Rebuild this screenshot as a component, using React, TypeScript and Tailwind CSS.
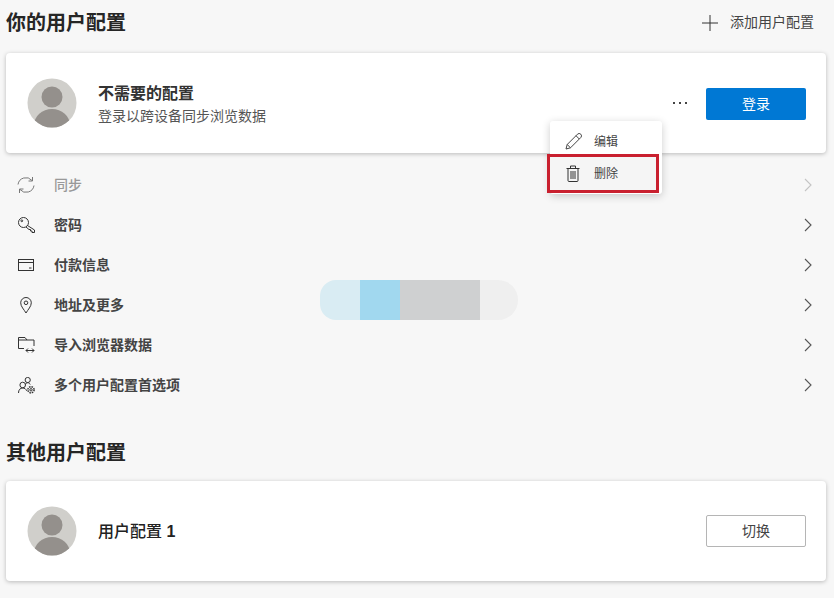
const FONT = "font-['Liberation_Sans','Noto_Sans_CJK_SC',sans-serif]"

function Avatar() {
  return (
    <svg width="50" height="50" viewBox="0 0 50 50" className="shrink-0">
      <defs>
        <clipPath id="avatar-clip">
          <circle cx="25" cy="25" r="24.5" />
        </clipPath>
      </defs>
      <circle cx="25" cy="25" r="24.5" fill="#d0cfcb" />
      <g clipPath="url(#avatar-clip)">
        <circle cx="25" cy="19" r="10.5" fill="#94908c" />
        <ellipse cx="25" cy="47" rx="18" ry="16" fill="#94908c" />
      </g>
    </svg>
  )
}

function Chevron({ light }: { light?: boolean }) {
  return (
    <svg width="10" height="14" viewBox="0 0 10 14" fill="none" stroke={light ? '#c4c4c4' : '#555'} strokeWidth="1.1">
      <path d="M2 1l6 6-6 6" />
    </svg>
  )
}

function SyncIcon() {
  return (
    <svg width="18" height="18" viewBox="0 0 18 18" fill="none" stroke="#777" strokeWidth="1">
      <path d="M1 8.500A8 8 0 0 1 15 4.500M15.500 1V5H11.500" />
      <path d="M17 9.500A8 8 0 0 1 3 13.500M2.500 17V13H6.500" />
    </svg>
  )
}

function KeyIcon() {
  return (
    <svg width="17" height="16" viewBox="0 0 17 16" fill="none" stroke="#333" strokeWidth="1">
      <circle cx="5.500" cy="5.500" r="5" />
      <circle cx="3.800" cy="3.800" r="0.900" />
      <path d="M9.500 8.500l7 4.500v2.500h-2.500v-1.500h-1.500v-1.500h-1.500L8 10" />
    </svg>
  )
}

function CardIcon() {
  return (
    <svg width="16" height="14" viewBox="0 0 16 14" fill="none" stroke="#333" strokeWidth="1">
      <rect x="0.5" y="1.5" width="15" height="11" />
      <path d="M0.5 4.5h15M11 10h2.5" />
    </svg>
  )
}

function PinIcon() {
  return (
    <svg width="12" height="17" viewBox="0 0 12 17" fill="none" stroke="#333" strokeWidth="1">
      <path d="M6 16C4 12.500 0.700 9.500 0.700 5.800a5.300 5.300 0 0 1 10.600 0c0 3.700-3.300 6.700-5.300 10.200z" />
      <circle cx="6" cy="5.800" r="1.800" />
    </svg>
  )
}

function ImportIcon() {
  return (
    <svg width="17" height="16" viewBox="0 0 17 16" fill="none" stroke="#333" strokeWidth="1">
      <path d="M6 11.500H0.500V0.500H7L9 3H16V9" />
      <path d="M0.500 3H9" />
      <path d="M8 13.500h8M10 11.500l-2 2 2 2M14 11.500l2 2-2 2" />
    </svg>
  )
}

function UsersIcon() {
  return (
    <svg width="17" height="17" viewBox="0 0 17 17" fill="none" stroke="#333" strokeWidth="1">
      <circle cx="4.700" cy="8" r="2.800" />
      <path d="M0.500 16c0-3.300 1.800-5 4.200-5 1.900 0 3.300 1 3.900 2.800" />
      <circle cx="9.700" cy="3" r="2.600" />
      <path d="M7.400 7.500c0.500-1.200 1.300-1.800 2.300-1.800 1.100 0 2 0.700 2.500 1.800" />
      <circle cx="13" cy="12.800" r="1.200" />
      <circle cx="13" cy="12.800" r="3.100" strokeDasharray="1.500 0.950" strokeWidth="1.500" />
    </svg>
  )
}

function PencilIcon() {
  return (
    <svg width="17" height="17" viewBox="0 0 17 17" fill="none" stroke="#444" strokeWidth="1">
      <path d="M1 16l1.200-4.500L12.500 1.200a1.800 1.800 0 0 1 3.300 3.300L5.500 14.800z" />
      <path d="M2.200 11.500l3.300 3.300M11 2.700l3.300 3.300" />
    </svg>
  )
}

function TrashIcon() {
  return (
    <svg width="14" height="17" viewBox="0 0 14 17" fill="none" stroke="#333" strokeWidth="1">
      <path d="M0.500 3.500h13M4.500 3.500V1h5v2.500M2 3.500V15.500a1 1 0 0 0 1 1h8a1 1 0 0 0 1-1V3.500" />
      <path d="M5 6v8M7 6v8M9 6v8" />
    </svg>
  )
}

const rows = [
  { label: '同步', icon: <SyncIcon />, muted: true },
  { label: '密码', icon: <KeyIcon /> },
  { label: '付款信息', icon: <CardIcon /> },
  { label: '地址及更多', icon: <PinIcon /> },
  { label: '导入浏览器数据', icon: <ImportIcon /> },
  { label: '多个用户配置首选项', icon: <UsersIcon /> },
]

export default function App() {
  return (
    <div className={`${FONT} relative w-[834px] h-[598px] overflow-hidden bg-[#f7f7f7] text-[#262626] px-[6px]`}>
      {/* Cabecera */}
      <div className="flex items-center justify-between h-[53px] pb-[8px]">
        <h1 className="text-[20px] font-bold leading-[28px]">你的用户配置</h1>
        <div className="flex items-center gap-[12px] pr-[14px] text-[14px] text-[#444]">
          <svg width="16" height="16" viewBox="0 0 16 16" stroke="#333" strokeWidth="1">
            <path d="M8 0v16M0 8h16" />
          </svg>
          <span>添加用户配置</span>
        </div>
      </div>

      {/* Tarjeta principal */}
      <div className="relative flex items-center w-[820px] h-[100px] bg-white rounded-[4px] shadow-[0_1px_4px_rgba(0,0,0,0.25)] pl-[21px] pr-[20px]">
        <Avatar />
        <div className="ml-[21px] flex-1 pt-[4px]">
          <p className="text-[16px] font-bold leading-[22px] text-[#333]">不需要的配置</p>
          <p className="text-[14px] leading-[22px] text-[#555]">登录以跨设备同步浏览数据</p>
        </div>
        <span className="mr-[19px] flex gap-[4px]">
          <i className="w-[2px] h-[2px] bg-[#444]" />
          <i className="w-[2px] h-[2px] bg-[#444]" />
          <i className="w-[2px] h-[2px] bg-[#444]" />
        </span>
        <button className="mt-[2px] w-[100px] h-[32px] bg-[#0078d4] text-white text-[14px] rounded-[2px]">登录</button>

        {/* Menú contextual */}
        <div className="absolute z-20 left-[544px] top-[68px] w-[112px] h-[73px] bg-white rounded-[3px] shadow-[0_2px_8px_rgba(0,0,0,0.2)] flex flex-col text-[12px] text-[#444]">
          <div className="flex items-center h-[33px] pt-[8px] pl-[15px] gap-[12px]">
            <PencilIcon />
            <span>编辑</span>
          </div>
          <div className="flex items-center h-[39px] w-[112px] -ml-[3px] pl-[16px] gap-[14px] bg-[#f5f5f5] border-[3px] border-[#c9202f]">
            <TrashIcon />
            <span>删除</span>
          </div>
        </div>
      </div>

      {/* Lista de opciones */}
      <div className="mt-[12px] flex flex-col">
        {rows.map((row) => (
          <div key={row.label} className="flex items-center h-[40px] pl-[11px] pr-[15px]">
            <span className="w-[18px] flex justify-center">{row.icon}</span>
            <span className={`ml-[19px] flex-1 text-[14px] ${row.muted ? 'font-medium text-[#999]' : 'font-bold text-[#444]'}`}>
              {row.label}
            </span>
            <Chevron light={row.muted} />
          </div>
        ))}
      </div>

      {/* Parche difuminado */}
      <div className="absolute left-[320px] top-[280px] flex h-[40px] w-[198px] overflow-hidden rounded-l-[16px] rounded-r-[20px]">
        <div className="w-[40px] bg-[#d9ecf3]" />
        <div className="w-[40px] bg-[#a1d8ef]" />
        <div className="w-[80px] bg-[#cfd0d1]" />
        <div className="w-[38px] bg-[#efefef]" />
      </div>

      {/* Otros perfiles */}
      <h2 className="mt-[34px] h-[28px] text-[20px] font-bold leading-[28px]">其他用户配置</h2>
      <div className="mt-[14px] flex items-center w-[820px] h-[100px] bg-white rounded-[4px] shadow-[0_1px_4px_rgba(0,0,0,0.25)] pl-[21px] pr-[20px]">
        <Avatar />
        <p className="ml-[21px] pt-[1px] flex-1 text-[16px] font-medium text-[#222]">用户配置 <span className="font-bold">1</span></p>
        <button className="w-[100px] h-[32px] bg-white border border-[#b5b5b5] rounded-[2px] text-[14px] text-[#444]">切换</button>
      </div>
    </div>
  )
}
